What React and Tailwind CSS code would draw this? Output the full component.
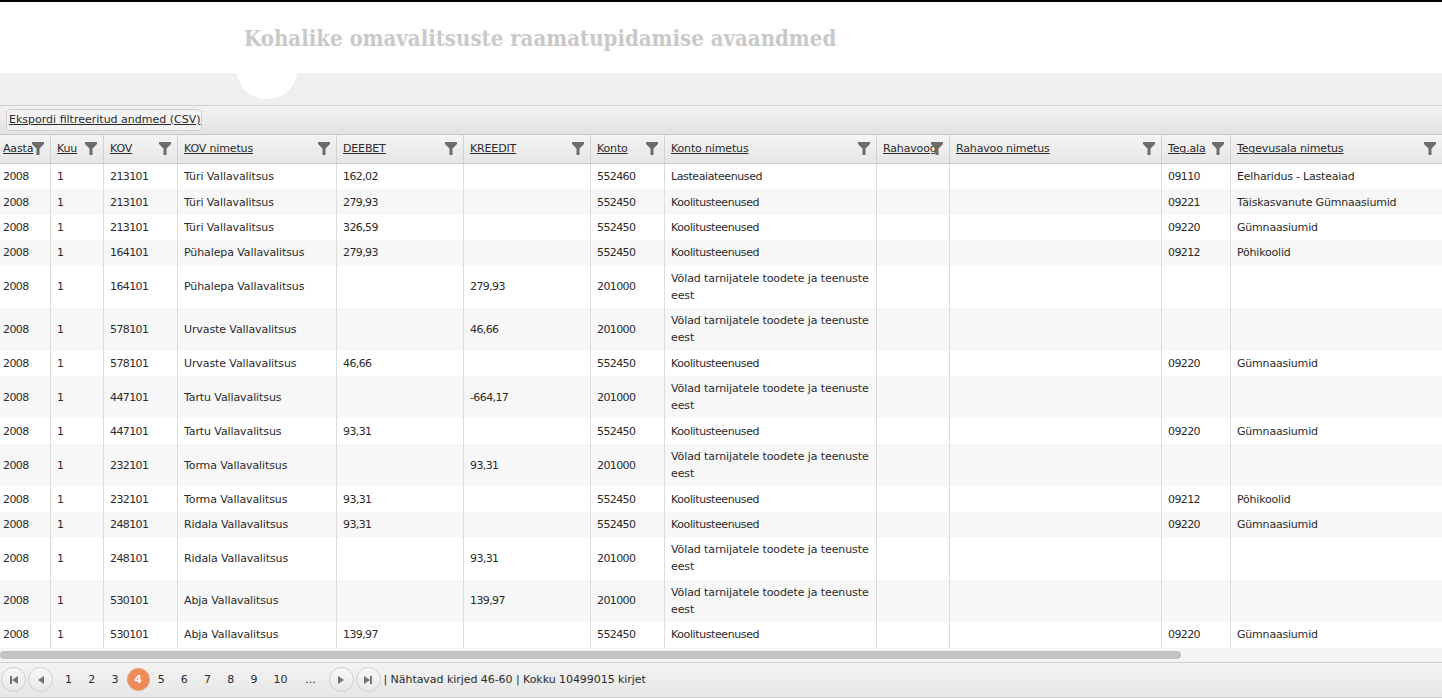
const KN = "Koolitusteenused";
const LA = "Lasteaiateenused";
const VT = "Võlad tarnijatele toodete ja teenuste eest";
const rows = [
  ["213101","Türi Vallavalitsus","162,02","","552460",LA,"09110","Eelharidus - Lasteaiad"],
  ["213101","Türi Vallavalitsus","279,93","","552450",KN,"09221","Täiskasvanute Gümnaasiumid"],
  ["213101","Türi Vallavalitsus","326,59","","552450",KN,"09220","Gümnaasiumid"],
  ["164101","Pühalepa Vallavalitsus","279,93","","552450",KN,"09212","Põhikoolid"],
  ["164101","Pühalepa Vallavalitsus","","279,93","201000",VT,"",""],
  ["578101","Urvaste Vallavalitsus","","46,66","201000",VT,"",""],
  ["578101","Urvaste Vallavalitsus","46,66","","552450",KN,"09220","Gümnaasiumid"],
  ["447101","Tartu Vallavalitsus","","-664,17","201000",VT,"",""],
  ["447101","Tartu Vallavalitsus","93,31","","552450",KN,"09220","Gümnaasiumid"],
  ["232101","Torma Vallavalitsus","","93,31","201000",VT,"",""],
  ["232101","Torma Vallavalitsus","93,31","","552450",KN,"09212","Põhikoolid"],
  ["248101","Ridala Vallavalitsus","93,31","","552450",KN,"09220","Gümnaasiumid"],
  ["248101","Ridala Vallavalitsus","","93,31","201000",VT,"",""],
  ["530101","Abja Vallavalitsus","","139,97","201000",VT,"",""],
  ["530101","Abja Vallavalitsus","139,97","","552450",KN,"09220","Gümnaasiumid"],
];
const NUM = "tracking-[-0.6px]";
const cols = [
  ["Aasta","w-[51px]","pl-[3px]",NUM],["Kuu","w-[53px]","pl-[6px]",NUM],["KOV","w-[74px]","pl-[6px]",NUM],["KOV nimetus","w-[159px]","pl-[6px]","tracking-[-0.1px]"],
  ["DEEBET","w-[127px]","pl-[6px]",NUM],["KREEDIT","w-[127px]","pl-[6px]",NUM],["Konto","w-[74px]","pl-[6px]",NUM],["Konto nimetus","w-[212px]","pl-[6px]","tracking-[-0.1px]"],
  ["Rahavoog","w-[73px]","pl-[6px]",""],["Rahavoo nimetus","w-[212px]","pl-[6px]",""],["Teg.ala","w-[69px]","pl-[6px]",NUM],["Tegevusala nimetus","w-[212px]","pl-[6px]","tracking-[-0.2px]"],
];
const Funnel = () => (
  <svg viewBox="0 0 12 13" className="absolute right-[6px] top-[7px] w-[12px] h-[13px]">
    <path d="M0 0H12V2L7.5 6.5V13H4.5V6.5L0 2Z" fill="#6f6b68" />
  </svg>
);
const Cell = ({ w, pad, extra, children }) => (
  <div className={`${w} ${pad} ${extra} shrink-0 h-full flex items-center border-r border-[#dcdcdc] leading-[17px]`}>
    <span className={children === KN || children === LA ? "tracking-[-0.4px]" : ""}>{children}</span>
  </div>
);
const Nav = ({ d }) => (
  <div className="w-[25px] h-[25px] rounded-full border border-[#cfcfcf] bg-gradient-to-b from-[#f8f8f8] to-[#e8e8e8] flex items-center justify-center shrink-0">
    <svg viewBox="0 0 10 10" className="w-[10px] h-[10px]"><path d={d} fill="#77736f" /></svg>
  </div>
);
export default function App() {
  return (
    <div className="w-[1442px] h-[698px] overflow-hidden bg-white text-[#2b2b2b] text-[11px] flex flex-col" style={{ fontFamily: '"DejaVu Sans", sans-serif' }}>
      <div className="h-[2px] bg-black shrink-0" />
      <div className="h-[71px] shrink-0 pl-[244px] pt-[21px]">
        <h1 className="text-[22px] leading-[30px] font-bold text-[#c9c9c9] whitespace-nowrap" style={{ fontFamily: '"DejaVu Serif Condensed", "DejaVu Serif", serif', fontStretch: "condensed" }}>Kohalike omavalitsuste raamatupidamise avaandmed</h1>
      </div>
      <div className="relative h-[33px] shrink-0 bg-[#efefef] border-b border-[#d2d2d2] overflow-hidden">
        <div className="absolute left-[236px] top-[-36px] w-[62px] h-[62px] rounded-full bg-white" />
      </div>
      <div className="h-[28px] shrink-0 bg-gradient-to-b from-[#f2f2f2] to-[#e3e3e3] pl-[6px] pt-[3px]">
        <div className="inline-flex h-[22px] items-center pl-[2px] border border-[#cfcfcf] rounded-[5px] bg-[#f3f3f3] underline whitespace-nowrap">Ekspordi filtreeritud andmed (CSV)</div>
      </div>
      <div className="flex h-[30px] shrink-0 border-y border-[#c8c8c8] bg-gradient-to-b from-[#f4f4f4] to-[#e6e6e6]">
        {cols.map(([t, w, p]) => (
          <div key={t} className={`${w} ${p} relative shrink-0 h-full flex items-center pt-[1px] border-r border-[#d2d2d2] whitespace-nowrap tracking-[-0.15px]`}>
            <span className="underline">{t}</span>
            <Funnel />
          </div>
        ))}
      </div>
      <div className="shrink-0">
        {rows.map((r, i) => {
          const vals = ["2008", "1", r[0], r[1], r[2], r[3], r[4], r[5], "", "", r[6], r[7]];
          return (
            <div key={i} className={`flex ${r[5] === VT ? "h-[42.5px]" : "h-[25.4px]"} ${i % 2 ? "bg-[#f7f7f7]" : "bg-white"}`}>
              {cols.map(([t, w, p, x], j) => <Cell key={t} w={w} pad={p} extra={x}>{vals[j]}</Cell>)}
            </div>
          );
        })}
      </div>
      <div className="h-[14px] shrink-0 bg-[#f4f4f4] pt-[3px]">
        <div className="w-[1181px] h-[8px] rounded-full bg-[#c2c2c2]" />
      </div>
      <div className="flex-1 flex items-center pl-[1px] border-y border-[#d0d0d0] bg-gradient-to-b from-[#f3f3f3] to-[#e7e7e7] whitespace-nowrap">
        <Nav d="M1 1H3V9H1ZM9 1V9L3 5Z" />
        <div className="w-[2px]" />
        <Nav d="M8 1V9L2 5Z" />
        <div className="flex items-center ml-[4px]">
          {[1,2,3].map(n => <span key={n} className="w-[23.2px] text-center">{n}</span>)}
          <span className="w-[23px] h-[23px] rounded-full bg-[#ee8a58] border border-[#e8a27c] text-white font-bold flex items-center justify-center">4</span>
          {[5,6,7,8,9].map(n => <span key={n} className="w-[23.2px] text-center">{n}</span>)}
          <span className="w-[30px] text-center">10</span>
          <span className="w-[30px] text-center">...</span>
        </div>
        <div className="w-[3px]" />
        <Nav d="M2 1V9L8 5Z" />
        <div className="w-[2px]" />
        <Nav d="M1 1V9L7 5ZM7 1H9V9H7Z" />
        <span className="ml-[3px] tracking-[-0.05px]">| Nähtavad kirjed 46-60 | Kokku 10499015 kirjet</span>
      </div>
    </div>
  );
}
